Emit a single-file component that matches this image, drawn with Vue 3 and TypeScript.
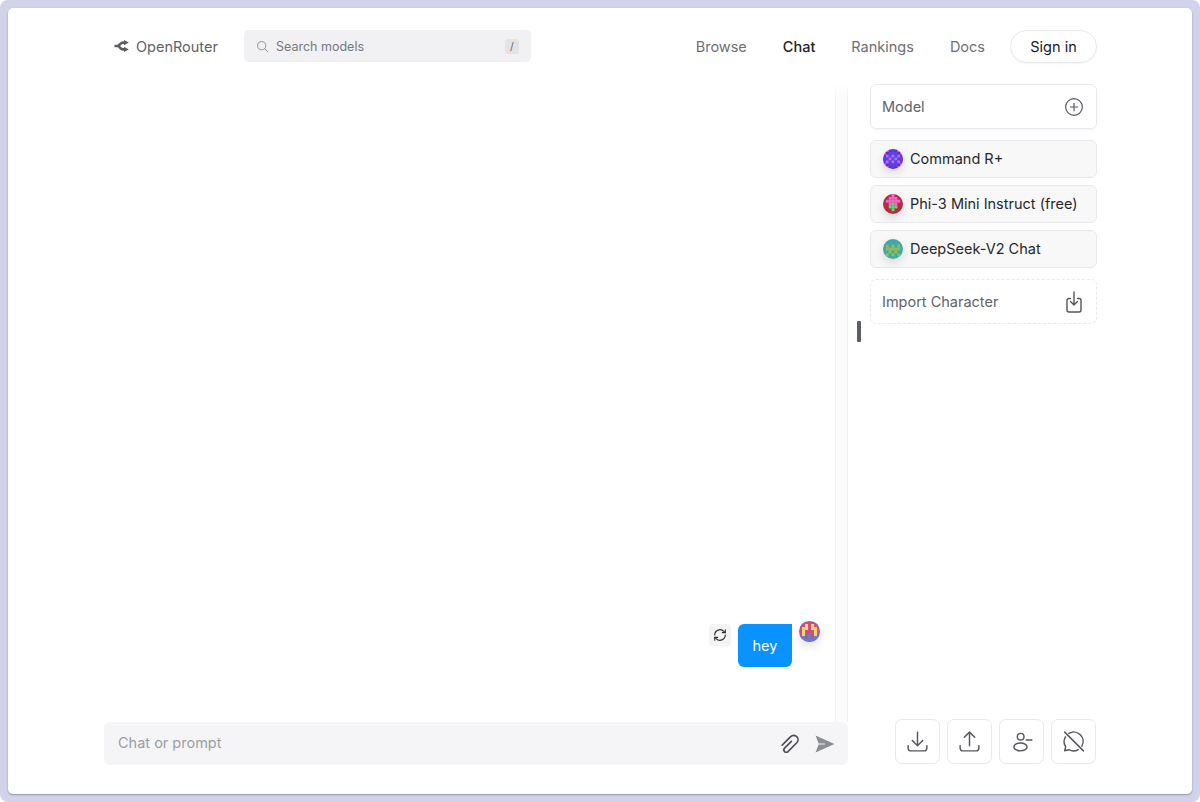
<script setup lang="ts">
interface Avatar { name: string; bg: string; colors: string[]; rows: string[] }

const models: Avatar[] = [
  {
    name: 'Command R+',
    bg: '#7a1fe0',
    colors: ['#4f4cde', '#b86ff5'],
    rows: ['0201020', '2011102', '0212120', '1121211', '0212120', '2011102', '0201020'],
  },
  {
    name: 'Phi-3 Mini Instruct (free)',
    bg: '#b32a44',
    colors: ['#f06ad0', '#62d870'],
    rows: ['0001000', '0011100', '0111110', '0012100', '0022200', '0002000', '0000000'],
  },
  {
    name: 'DeepSeek-V2 Chat',
    bg: '#3fa8a8',
    colors: ['#97bb55', '#6fb47c'],
    rows: ['0000000', '0000000', '0101010', '0111110', '0010100', '0101010', '0000000'],
  },
]

const userAvatar: Avatar = {
  name: 'user',
  bg: '#c8507a',
  colors: ['#efd27a', '#5f7fd0'],
  rows: ['2200022', '2010102', '0110110', '0100010', '0102010', '2202022', '2222222'],
}

function cells(a: Avatar) {
  const out: { x: number; y: number; fill: string }[] = []
  a.rows.forEach((row, y) => {
    row.split('').forEach((c, x) => {
      if (c !== '0') out.push({ x, y, fill: a.colors[Number(c) - 1] })
    })
  })
  return out
}
</script>

<template>
  <div class="frame">
    <div class="card">
      <header class="topbar">
        <div class="left">
          <a class="logo">
            <svg class="logo-mark" viewBox="0 0 15 12" width="15" height="12">
              <path d="M0.500 6h3c2.200 0 2.800-3.400 5.500-3.400h1.500M3.500 6c2.200 0 2.800 3.400 5.500 3.400h1.500" fill="none" stroke="#5b5d63" stroke-width="2.700" />
              <path d="M10 0 14.800 2.600 10 5.200zM10 6.800 14.800 9.400 10 12z" fill="#5b5d63" />
            </svg>
            <span>OpenRouter</span>
          </a>
          <div class="search">
            <svg class="search-icon" viewBox="0 0 24 24" width="13" height="13" fill="none" stroke="#8d9096" stroke-width="1.800">
              <circle cx="10.500" cy="10.500" r="7.500" />
              <path d="m16 16 6 6" stroke-linecap="round" />
            </svg>
            <span class="search-text">Search models</span>
            <kbd class="slash">/</kbd>
          </div>
        </div>
        <nav class="nav">
          <a>Browse</a>
          <a class="active">Chat</a>
          <a>Rankings</a>
          <a>Docs</a>
          <button class="signin">Sign in</button>
        </nav>
      </header>

      <main class="content">
        <section class="chat">
          <div class="messages">
            <div class="message">
              <button class="regen" aria-label="Regenerate">
                <svg viewBox="0 0 24 24" width="14" height="14" fill="none" stroke="#2f3136" stroke-width="2" stroke-linecap="round" stroke-linejoin="round">
                  <path d="M3 12a9 9 0 0 1 15.500-6.200L21 8" />
                  <path d="M21 3v5h-5" />
                  <path d="M21 12a9 9 0 0 1-15.500 6.200L3 16" />
                  <path d="M8 16H3v5" />
                </svg>
              </button>
              <div class="bubble">hey</div>
              <svg class="msg-avatar avatar" viewBox="0 0 7 7" width="21" height="21">
                <rect width="7" height="7" :fill="userAvatar.bg" />
                <rect v-for="(c, i) in cells(userAvatar)" :key="i" :x="c.x" :y="c.y" width="1.02" height="1.02" :fill="c.fill" />
              </svg>
            </div>
          </div>
          <div class="composer">
            <span class="placeholder">Chat or prompt</span>
            <svg class="clip" viewBox="0 0 24 24" width="23" height="23" fill="none" stroke="#4c4e54" stroke-width="1.700" stroke-linecap="round" stroke-linejoin="round">
              <path transform="translate(12.500 13) rotate(45)" d="M-0.500-4V6A2.500 2.500 0 0 0 4.500 6V-7A4.500 4.500 0 0 0-4.500-7V5.500" />
            </svg>
            <svg class="send" viewBox="0 0 20 18" width="20" height="18">
              <path d="M0.500 0.500 19.500 9 0.500 17.500 3.600 9.600H10V8.400H3.600z" fill="#8b8e95" />
            </svg>
          </div>
        </section>

        <div class="divider"></div>

        <aside class="side">
          <div class="side-top">
            <div class="panel model">
              <span>Model</span>
              <svg viewBox="0 0 24 24" width="20" height="20" fill="none" stroke="#55575d" stroke-width="1.400" stroke-linecap="round">
                <circle cx="12" cy="12" r="10" />
                <path d="M12 7.600v8.800M7.600 12h8.800" />
              </svg>
            </div>
            <div v-for="m in models" :key="m.name" class="model-chip">
              <svg class="avatar" viewBox="0 0 7 7" width="20" height="20">
                <rect width="7" height="7" :fill="m.bg" />
                <rect v-for="(c, i) in cells(m)" :key="i" :x="c.x" :y="c.y" width="1.02" height="1.02" :fill="c.fill" />
              </svg>
              <span>{{ m.name }}</span>
            </div>
            <div class="panel import">
              <span>Import Character</span>
              <svg viewBox="0 0 24 24" width="24" height="24" fill="none" stroke="#55575d" stroke-width="1.400" stroke-linecap="round" stroke-linejoin="round">
                <path d="M8.500 8.500H7a2 2 0 0 0-2 2V20a2 2 0 0 0 2 2h10a2 2 0 0 0 2-2v-9.500a2 2 0 0 0-2-2h-1.500" />
                <path d="M12 2v13M8.500 11.500 12 15l3.500-3.500" />
              </svg>
            </div>
          </div>
          <div class="actions">
            <button class="action" aria-label="Download">
              <svg viewBox="0 0 24 24" width="25" height="25" fill="none" stroke="#55575d" stroke-width="1.400" stroke-linecap="round" stroke-linejoin="round">
                <path d="M12 3v13M7 11l5 5 5-5" />
                <path d="M3 16v2.500A2.500 2.500 0 0 0 5.500 21h13a2.500 2.500 0 0 0 2.500-2.500V16" />
              </svg>
            </button>
            <button class="action" aria-label="Upload">
              <svg viewBox="0 0 24 24" width="25" height="25" fill="none" stroke="#55575d" stroke-width="1.400" stroke-linecap="round" stroke-linejoin="round">
                <path d="M12 16V3M7 8l5-5 5 5" />
                <path d="M3 16v2.500A2.500 2.500 0 0 0 5.500 21h13a2.500 2.500 0 0 0 2.500-2.500V16" />
              </svg>
            </button>
            <button class="action" aria-label="Remove user">
              <svg viewBox="0 0 24 24" width="25" height="25" fill="none" stroke="#55575d" stroke-width="1.400" stroke-linecap="round" stroke-linejoin="round">
                <circle cx="11.200" cy="7.400" r="3.200" />
                <ellipse cx="11" cy="17.200" rx="6.300" ry="3.800" />
                <path d="M16.500 10.500h5.500" />
              </svg>
            </button>
            <button class="action" aria-label="Hide chat">
              <svg viewBox="0 0 24 24" width="25" height="25" fill="none" stroke="#55575d" stroke-width="1.400" stroke-linecap="round" stroke-linejoin="round">
                <path d="M7.500 4.300A9 9 0 0 1 20 16.500M4.300 7.500A9 9 0 0 0 4.500 17L3.500 20.800l4-.9A9 9 0 0 0 16.500 19.800" />
                <path d="M3.500 3l18 18" />
              </svg>
            </button>
          </div>
        </aside>

        <span class="handle"></span>
      </main>
    </div>
  </div>
</template>

<style>
html, body { margin: 0; padding: 0; background: #fff; }
</style>

<style scoped>
.frame {
  box-sizing: border-box;
  width: 1200px;
  height: 802px;
  padding: 8px;
  background: #d2d2ea;
  border-radius: 8px;
  font-family: Inter, "Liberation Sans", sans-serif;
}
.card {
  height: 100%;
  background: #fff;
  border-radius: 5px;
  box-shadow: 0 1px 2px rgba(70, 70, 110, 0.45);
  display: flex;
  flex-direction: column;
  padding: 0 95px 29px 96px;
  box-sizing: border-box;
  overflow: hidden;
}
.topbar {
  flex: none;
  height: 76px;
  display: flex;
  align-items: center;
  justify-content: space-between;
}
.left { display: flex; align-items: center; }
.logo {
  display: flex;
  align-items: center;
  gap: 8px;
  width: 140px;
  padding-left: 9px;
  box-sizing: border-box;
  font-size: 14.500px;
  color: #606268;
}
.logo-mark { flex: none; margin-left: 1px; margin-right: -1px; }
.search {
  box-sizing: border-box;
  width: 287px;
  height: 32px;
  background: #f1f1f3;
  border-radius: 5px;
  display: flex;
  align-items: center;
  padding: 0 12px;
  font-size: 12.500px;
  color: #77797f;
}
.search-icon { flex: none; }
.search-text { flex: 1; margin-left: 7px; }
.slash {
  width: 14px;
  height: 15px;
  border-radius: 3px;
  background: #e3e3e6;
  font-family: inherit;
  font-size: 10.500px;
  display: flex;
  align-items: center;
  justify-content: center;
  color: #66686e;
}
.nav {
  display: flex;
  align-items: center;
  font-size: 14.500px;
  color: #6d6f75;
}
.nav a { margin-right: 36px; }
.nav a:nth-child(4) { margin-right: 25px; }
.nav a.active { color: #1f2126; font-weight: 500; }
.signin {
  box-sizing: border-box;
  width: 87px;
  height: 33px;
  border: 1px solid #e6e7ea;
  border-radius: 17px;
  background: #fff;
  font: inherit;
  color: #17181c;
  box-shadow: 0 1px 2px rgba(0, 0, 0, 0.04);
}
.content {
  flex: 1;
  min-height: 0;
  display: flex;
  position: relative;
}
.chat {
  flex: none;
  width: 744px;
  display: flex;
  flex-direction: column;
}
.messages {
  flex: 1;
  min-height: 0;
  display: flex;
  flex-direction: column;
  justify-content: flex-end;
  padding: 0 28px 55px 0;
}
.message {
  display: flex;
  justify-content: flex-end;
  align-items: flex-start;
}
.regen {
  box-sizing: border-box;
  width: 22px;
  height: 22px;
  padding: 0;
  border: 0;
  border-radius: 4px;
  background: #f4f4f5;
  display: flex;
  align-items: center;
  justify-content: center;
  margin-right: 7px;
}
.bubble {
  box-sizing: border-box;
  width: 54px;
  height: 43px;
  background: #0a93ff;
  color: #fff;
  border-radius: 6px 0 6px 6px;
  font-size: 14.500px;
  display: flex;
  align-items: center;
  justify-content: center;
}
.msg-avatar {
  margin: -3px 0 0 7px;
}
.avatar {
  flex: none;
  border-radius: 50%;
  box-shadow: 0 4px 8px rgba(30, 30, 60, 0.14);
}
.composer {
  flex: none;
  box-sizing: border-box;
  height: 43px;
  background: #f5f5f7;
  border-radius: 6px;
  display: flex;
  align-items: center;
  padding: 0 13px 0 14px;
  font-size: 14.500px;
  color: #9c9ea4;
}
.placeholder { flex: 1; padding-bottom: 2px; }
.clip { margin-right: 15px; }
.divider {
  position: absolute;
  left: 731px;
  top: 0;
  bottom: 43px;
  width: 13px;
  box-sizing: border-box;
  border-left: 1px solid #f1f1f3;
  border-right: 1px solid #f1f1f3;
  background: #fcfcfc;
  -webkit-mask-image: linear-gradient(to bottom, transparent, #000 14px);
  mask-image: linear-gradient(to bottom, transparent, #000 14px);
}
.side {
  flex: none;
  width: 227px;
  margin-left: 22px;
  display: flex;
  flex-direction: column;
  justify-content: space-between;
}
.side-top { display: flex; flex-direction: column; }
.panel {
  box-sizing: border-box;
  border: 1px solid #e8e9ec;
  border-radius: 6px;
  display: flex;
  align-items: center;
  justify-content: space-between;
  padding: 0 12px 0 11px;
  font-size: 14.500px;
  color: #616369;
}
.panel span { padding-bottom: 1px; }
.model {
  height: 45px;
  margin-bottom: 11px;
  box-shadow: 0 1px 2px rgba(0, 0, 0, 0.05);
}
.import {
  height: 45px;
  margin-top: 11px;
  padding-right: 10px;
  border-style: dashed;
}
.model-chip {
  box-sizing: border-box;
  height: 38px;
  margin-bottom: 7px;
  background: #f8f8f9;
  border: 1px solid #e8e9ec;
  border-radius: 6px;
  display: flex;
  align-items: center;
  gap: 7px;
  padding-left: 12px;
  font-size: 14.500px;
  color: #26282d;
}
.model-chip span { padding-bottom: 2px; }
.model-chip:nth-of-type(4) { margin-bottom: 0; }
.actions {
  display: flex;
  gap: 7px;
  justify-content: flex-end;
  height: 45px;
  margin: 0 1px 1px 0;
}
.action {
  box-sizing: border-box;
  width: 45px;
  height: 45px;
  padding: 0;
  background: #fff;
  border: 1px solid #e8e9ec;
  border-radius: 7px;
  display: flex;
  align-items: center;
  justify-content: center;
}
.handle {
  position: absolute;
  left: 753px;
  top: 237px;
  width: 4px;
  height: 21px;
  background: #5d5f68;
  border-radius: 1px;
}
</style>
